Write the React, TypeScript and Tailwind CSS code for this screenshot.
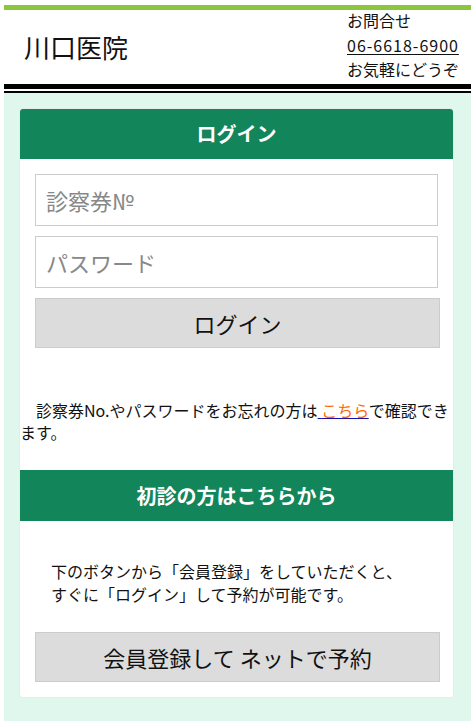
export default function App() {
  return (
    <div
      className="ml-[4px] min-h-[721px] bg-white text-[#111]"
      style={{ fontFamily: '"Noto Sans CJK JP", "Noto Sans", sans-serif' }}
    >
      <div className="h-[5px]" />
      <div className="h-[5px] bg-[#8cc63f]" />

      {/* header */}
      <header className="flex h-[74px] items-center">
        <h1 className="w-[343px] pl-[20px] text-[26px] leading-none font-normal">
          川口医院
        </h1>
        <div className="-mt-[2px] self-start text-[16px] leading-[24.5px]">
          <p>お問合せ</p>
          <p className="tracking-[1px] underline underline-offset-2">06-6618-6900</p>
          <p>お気軽にどうぞ</p>
        </div>
      </header>
      <div className="h-[5px] bg-black" />
      <div className="h-[2px]" />
      <div className="h-[2px] bg-black" />

      <main className="bg-[#e0f7ee] pt-[15px] pr-[17px] pb-[24px] pl-[15px]">
        <div className="rounded-[3px] border border-[#e6ece9] bg-white">
          {/* login */}
          <h2 className="flex h-[50px] items-center justify-center rounded-t-[3px] bg-[#13855a] text-[20px] font-bold text-white">
            ログイン
          </h2>
          <div className="flex flex-col gap-[10px] px-[15px] pt-[15px]">
            <input
              placeholder="診察券№"
              className="h-[52px] w-full border border-[#ccc] px-[10px] text-[22px] placeholder:text-[#888] focus:outline-none"
            />
            <input
              type="password"
              placeholder="パスワード"
              className="h-[52px] w-full border border-[#ccc] px-[10px] text-[22px] placeholder:text-[#888] focus:outline-none"
            />
            <button className="h-[50px] w-[405px] border border-[#ccc] bg-[#dcdcdc] text-[22px] text-[#111]">
              ログイン
            </button>
          </div>

          <p className="mt-[51px] mb-[27px] text-[16px] leading-[22px]">
            {"\u3000"}診察券No.やパスワードをお忘れの方は
            <a href="#" className="text-[#1a0dab] underline">
              {" "}
              <span className="text-[#ff6a00]">こちら</span>
            </a>
            で確認できます。
          </p>

          {/* first visit */}
          <h2 className="flex h-[51px] items-center justify-center bg-[#13855a] text-[20px] font-bold text-white">
            初診の方はこちらから
          </h2>
          <div className="px-[15px] pt-[39px] pb-[15px]">
            <p className="pl-[16px] text-[16px] leading-[23px]">
              下のボタンから「会員登録」をしていただくと、
              <br />
              すぐに「ログイン」して予約が可能です。
            </p>
            <button className="mt-[26px] h-[50px] w-[405px] border border-[#ccc] bg-[#dcdcdc] text-[22px] text-[#111]">
              会員登録して ネットで予約
            </button>
          </div>
        </div>
      </main>
    </div>
  );
}
